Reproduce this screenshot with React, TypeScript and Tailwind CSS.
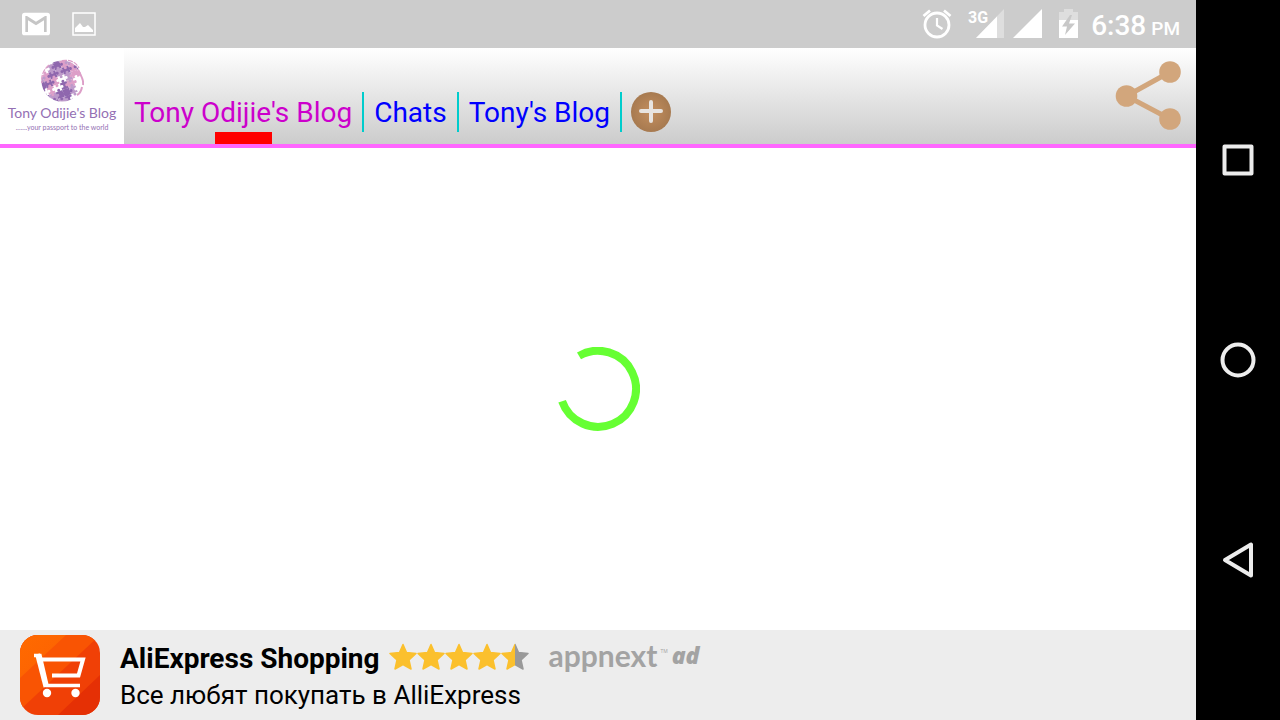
import React from "react";

interface Tab {
  title: string;
  active?: boolean;
}

const tabs: Tab[] = [
  { title: "Tony Odijie's Blog", active: true },
  { title: "Chats" },
  { title: "Tony's Blog" },
];

const PURPLE = "#8f67ae";
const LILAC = "#bd9aca";
const PINK = "#dd9fc8";
const WHITE = "#ffffff";

// colours of the puzzle pieces, row by row
const pieces = [
  [WHITE, WHITE, WHITE, PURPLE, LILAC, WHITE, WHITE],
  [WHITE, WHITE, LILAC, PURPLE, PINK, LILAC, WHITE],
  [LILAC, PINK, PURPLE, LILAC, PURPLE, PINK, PURPLE],
  [PURPLE, PURPLE, PINK, WHITE, LILAC, PINK, PINK],
  [WHITE, PINK, WHITE, PURPLE, PINK, WHITE, WHITE],
  [PURPLE, LILAC, PURPLE, PURPLE, LILAC, WHITE, PINK],
  [WHITE, PURPLE, LILAC, PURPLE, WHITE, WHITE, WHITE],
];

const PuzzleGlobe = () => (
  <svg className="h-11 w-11" viewBox="0 0 44 44" aria-hidden="true">
    <defs>
      <clipPath id="globe">
        <circle cx="22" cy="22" r="20.500" />
      </clipPath>
    </defs>
    <g clipPath="url(#globe)">
      <g transform="rotate(-20 22 20)">
        {pieces.map((row, y) =>
          row.map((fill, x) => (
            <rect key={`${x}-${y}`} x={x * 7 - 2.5} y={y * 7 - 4.5} width="7" height="7" fill={fill} />
          ))
        )}
        {pieces.map((row, y) =>
          row.map((fill, x) => {
            const cx = x * 7 + 1;
            const cy = y * 7 - 1;
            const dx = (x + y) % 2 === 0 ? 4.5 : 0;
            const dy = dx ? 0 : 4.5;
            return (
              <g key={`${x}-${y}`} fill={fill}>
                <circle cx={cx + dx} cy={cy + dy} r="1.500" />
                <circle cx={cx - dx} cy={cy - dy} r="1.500" />
              </g>
            );
          })
        )}
      </g>
    </g>
    <path d="M22 1.500Q34 0 39 9M9 6Q0 14 2 24" fill="none" stroke={PINK} strokeWidth="1.200" strokeDasharray="5 1" />
    <path d="M38 12Q44 20 43 26M42 28Q41 34 37 36" fill="none" stroke={PINK} strokeWidth="2" />
  </svg>
);

const StatusBar = () => (
  <div className="flex h-12 items-center justify-between bg-[#cccccc] pr-4 pl-5 text-white">
    <div className="flex items-center gap-4">
      <svg className="h-8 w-8" viewBox="0 0 24 24" role="img" aria-label="Gmail">
        <rect x="1.500" y="3.500" width="21" height="17" rx="2" fill="#fff" />
        <path d="M20 18H18V9.250L12 13L6 9.250V18H4V6H5.200L12 10.250L18.800 6H20Z" fill="#c6c6c6" />
      </svg>
      <svg className="h-8 w-8" viewBox="0 0 32 32" role="img" aria-label="Picture">
        <rect x="5" y="5" width="22" height="22" fill="none" stroke="#fff" strokeWidth="1.500" />
        <path d="M7 24V20L12 15L15 19H17L20 17L25 22V24Z" fill="#fff" />
      </svg>
    </div>
    <div className="flex items-center">
      <svg className="h-8 w-8" viewBox="0 0 32 32" role="img" aria-label="Alarm">
        <g fill="none" stroke="#fff" strokeWidth="2.800">
          <circle cx="16" cy="17" r="12" />
          <path d="M2.500 8L9 2.500M29.500 8L23 2.500" />
          <path d="M16 10V17.500L21.500 21" strokeWidth="2.200" />
        </g>
      </svg>
      <svg className="ml-[14px] h-8 w-10" viewBox="0 0 40 32" role="img" aria-label="3G signal">
        <path d="M37 1V30H9Z" fill="#dedede" />
        <path d="M30 8.500V30H9Z" fill="#fff" />
        <text x="1" y="15" className="text-[16px] font-bold" fill="#fff" stroke="#ccc" strokeWidth="1" paintOrder="stroke" fontFamily="Roboto, sans-serif">
          3G
        </text>
      </svg>
      <svg className="ml-1 h-8 w-8" viewBox="0 0 32 32" role="img" aria-label="Signal">
        <path d="M31 1V30H2Z" fill="#fff" />
      </svg>
      <svg className="ml-3 h-8 w-7" viewBox="0 0 28 32" role="img" aria-label="Battery charging">
        <path d="M4 4H9V1H18V4H23V13H4Z" fill="#dedede" />
        <path d="M4 12H23V30H4Z" fill="#fff" />
        <path d="M15 7L7 18.500H12L10 27L20 15.500H14L17 7Z" fill="#c8c8c8" />
      </svg>
      <p className="ml-2 flex items-baseline gap-[5px] pt-[6px] leading-8 font-medium">
        <span className="text-[28px]">6:38</span>
        <span className="text-[19px]">PM</span>
      </p>
    </div>
  </div>
);

const Header = () => (
  <header className="flex h-[100px] border-b-4 border-[#ff66ff] bg-linear-to-b from-white to-[#cccccc]">
    <a href="#" className="flex w-[124px] shrink-0 flex-col items-center bg-white pt-[11px] font-[Lato,sans-serif] text-[#9470b4]">
      <PuzzleGlobe />
      <span className="text-[14px] leading-5 whitespace-nowrap">Tony Odijie's Blog</span>
      <span className="text-[7px] leading-2 whitespace-nowrap">.......your passport to the world</span>
    </a>
    <nav className="flex items-end">
      {tabs.map((tab) => (
        <div key={tab.title} className="flex">
          <button className="flex h-[52px] flex-col items-center px-[10px] text-[28px]">
            <span className={tab.active ? "h-10 leading-[42px] text-[#cc00cc]" : "h-10 leading-[42px] text-[#0000ff]"}>
              {tab.title}
            </span>
            {tab.active && <span className="h-3 w-[57px] bg-[#ff0000]" />}
          </button>
          <span className="h-10 w-[2px] bg-[#00cccc]" />
        </div>
      ))}
      <button aria-label="Add tab" className="mb-3 ml-[9px] h-10 w-10">
        <svg viewBox="0 0 40 40">
          <defs>
            <radialGradient id="add">
              <stop offset="0" stopColor="#c48f5f" />
              <stop offset="1" stopColor="#a77a50" />
            </radialGradient>
          </defs>
          <circle cx="20" cy="20" r="20" fill="url(#add)" />
          <path d="M20 10V29M10 19H30" stroke="#e8e4e0" strokeWidth="4" strokeLinecap="round" />
        </svg>
      </button>
    </nav>
    <button aria-label="Share" className="mr-3 ml-auto">
      <svg className="h-[72px] w-[72px]" viewBox="0 0 72 72" fill="#d2a67c">
        <path d="M58 12L14.500 36L58 59" fill="none" stroke="#d2a67c" strokeWidth="5" />
        <circle cx="58" cy="12" r="10.800" />
        <circle cx="14.500" cy="36" r="10.800" />
        <circle cx="58" cy="59" r="10.800" />
      </svg>
    </button>
  </header>
);

const Spinner = () => (
  <svg className="h-[84px] w-[84px]" viewBox="0 0 84 84" role="img" aria-label="Loading">
    <path d="M23 8.900A38 38 0 1 1 6.100 54.300" fill="none" stroke="#66ff33" strokeWidth="8" />
  </svg>
);

const STAR = "M14 1.500L17.500 9.500L27 10.500L20 17L22 26L14 21.500L6 26L8 17L1 10.500L10.500 9.500Z";

const Rating = () => (
  <svg className="h-7 w-[140px]" viewBox="0 0 140 28" role="img" aria-label="4.5 stars">
    <defs>
      <linearGradient id="half" gradientUnits="userSpaceOnUse" x1="0" x2="28" y1="0" y2="0">
        <stop offset="0.5" stopColor="#fbc02d" />
        <stop offset="0.5" stopColor="#999999" />
      </linearGradient>
    </defs>
    {[0, 1, 2, 3, 4].map((i) => {
      const fill = i === 4 ? "url(#half)" : "#fbc02d";
      return (
        <path key={i} d={STAR} transform={`translate(${i * 28} 0)`} fill={fill} stroke={fill} strokeWidth="1.500" strokeLinejoin="round" />
      );
    })}
  </svg>
);

const CartIcon = () => (
  <svg className="h-20 w-20 shrink-0" viewBox="0 0 80 80" aria-hidden="true">
    <defs>
      <clipPath id="cart">
        <rect width="80" height="80" rx="18" />
      </clipPath>
      <linearGradient id="cartTop" x2="1" y2="1">
        <stop offset="0" stopColor="#ff6a00" />
        <stop offset="1" stopColor="#fc6002" />
      </linearGradient>
    </defs>
    <g clipPath="url(#cart)">
      <rect width="80" height="80" fill="#f04006" />
      <path d="M0 0H80L0 75Z" fill="#f95403" />
      <path d="M0 0H46L0 43Z" fill="url(#cartTop)" />
      <path d="M80 40V80H38Z" fill="#e53005" />
    </g>
    <g fill="none" stroke="#fff">
      <path d="M14 20.500H20L27 50.500H60" strokeWidth="3.500" />
      <path d="M17.500 19L26 52" strokeWidth="5" />
      <path d="M21 24.500H63L58.500 40.500H32" strokeWidth="4" />
    </g>
    <circle cx="27" cy="58" r="4.200" fill="#fff" />
    <circle cx="55.500" cy="58" r="4.200" fill="#fff" />
  </svg>
);

const AdBanner = () => (
  <footer className="flex h-[90px] items-center gap-5 bg-[#ededed] px-5 text-black">
    <CartIcon />
    <div className="pt-1">
      <div className="flex h-9 items-center">
        <h2 className="text-[28px] leading-9 font-bold">AliExpress Shopping</h2>
        <span className="ml-[9px] pb-1">
          <Rating />
        </span>
        <p className="ml-5 flex items-start pb-2 font-['Open_Sans',sans-serif] text-[#a3a3a3]">
          <span className="font-[Lato,sans-serif] text-[30px] leading-8 font-bold">appnext</span>
          <span className="mt-2 mr-1 ml-[3px] text-[5px] leading-2">TM</span>
          <span className="text-[23px] leading-8 font-extrabold italic">ad</span>
        </p>
      </div>
      <p className="text-[26px] leading-9">Все любят покупать в AlliExpress</p>
    </div>
  </footer>
);

const SystemNav = () => (
  <nav className="flex w-[84px] shrink-0 flex-col items-center justify-center gap-[160px] bg-black">
    <button aria-label="Recent apps" className="h-10 w-10">
      <svg viewBox="0 0 40 40" fill="none" stroke="#ededed" strokeWidth="4" strokeLinejoin="round">
        <rect x="6.500" y="6.500" width="27" height="27" />
      </svg>
    </button>
    <button aria-label="Home" className="h-10 w-10">
      <svg viewBox="0 0 40 40" fill="none" stroke="#ededed" strokeWidth="4">
        <circle cx="20" cy="20" r="15.500" />
      </svg>
    </button>
    <button aria-label="Back" className="h-10 w-10">
      <svg viewBox="0 0 40 40" fill="none" stroke="#ededed" strokeWidth="4" strokeLinejoin="round">
        <path d="M33 4.500V35.500L7 20Z" />
      </svg>
    </button>
  </nav>
);

const App = () => {
  return (
    <div className="flex min-h-screen bg-white font-[Roboto,sans-serif]">
      <div className="flex min-w-0 flex-1 flex-col">
        <StatusBar />
        <Header />
        <main className="flex flex-1 items-center justify-center">
          <Spinner />
        </main>
        <AdBanner />
      </div>
      <SystemNav />
    </div>
  );
};

export default App;
